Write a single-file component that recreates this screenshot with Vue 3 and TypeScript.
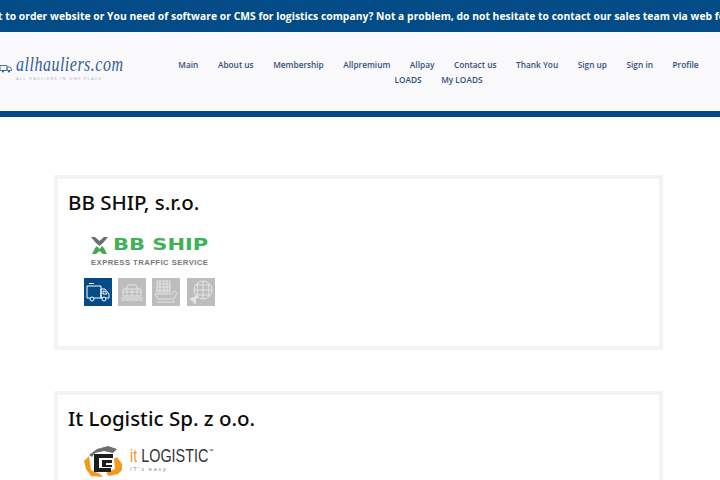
<script setup lang="ts">
const row1: string[] = ['Main', 'About us', 'Membership', 'Allpremium', 'Allpay', 'Contact us', 'Thank You', 'Sign up', 'Sign in', 'Profile']
const row2: string[] = ['LOADS', 'My LOADS']
</script>

<template>
  <div class="page">
    <div class="ticker">
      <span class="ticker-text">If you want to order website or You need of software or CMS for logistics company? Not a problem, do not hesitate to contact our sales team via web form</span>
    </div>
    <header class="header">
      <div class="brand">
        <svg class="truck" width="12" height="9" viewBox="0 0 12 9" fill="none" stroke="#4f79a6" stroke-width="1">
          <path d="M0 1.5h7v5H0zM7 3h3l1.500 2v1.500H7z" />
          <circle cx="3" cy="7.500" r="1" fill="#24527f" stroke="none" />
          <circle cx="9" cy="7.500" r="1" fill="#24527f" stroke="none" />
        </svg>
        <div class="brand-text">
          <div class="brand-name">allhauliers.com</div>
          <div class="brand-sub">ALL HAULIERS IN ONE PLACE</div>
        </div>
      </div>
      <nav class="nav">
        <div class="nav-row">
          <a v-for="item in row1" :key="item" class="nav-link">{{ item }}</a>
        </div>
        <div class="nav-row">
          <a v-for="item in row2" :key="item" class="nav-link">{{ item }}</a>
        </div>
      </nav>
    </header>

    <main class="list">
      <section class="card card-first">
        <h2 class="title">BB SHIP, s.r.o.</h2>
        <div class="bb-logo">
          <div class="bb-top">
            <svg width="17" height="17" viewBox="0 0 17 17">
              <path d="M0 0h4l4.500 4L13 0h4l-5 6-3.500 3L5 6z" fill="#6d6d6d" />
              <path d="M1 17l3-6 2-2 2.500 3L11 9l2 2 3 6h-4l-3.500-3L5 17z" fill="#43a94f" />
            </svg>
            <span class="bb-name">BB SHIP</span>
          </div>
          <div class="bb-sub">EXPRESS TRAFFIC SERVICE</div>
        </div>
        <div class="services">
          <div class="service active">
            <svg width="28" height="28" viewBox="0 0 28 28" fill="none" stroke="#fff" stroke-width="1">
              <path d="M3 8h14v12H3zM17 11h4l4 5v4h-8zM5 5.500h5" />
              <path d="M19 13h2l2 3h-4z" />
              <circle cx="8" cy="21" r="2" fill="#024b86" />
              <circle cx="20" cy="21" r="2" fill="#024b86" />
            </svg>
          </div>
          <div class="service">
            <svg width="28" height="28" viewBox="0 0 28 28" fill="none" stroke="#e4e4e4" stroke-width="1">
              <path d="M8 11l2-4h8l2 4M5 11h18v7H5zM5 14h18M9 11v7M14 11v7M19 11v7M3 20h22M3 22h22" />
            </svg>
          </div>
          <div class="service">
            <svg width="28" height="28" viewBox="0 0 28 28" fill="none" stroke="#e4e4e4" stroke-width="1">
              <path d="M5 3h13v11H5zM5 6h13M5 9h13M5 12h13M8 3v11M12 3v11M15 3v11" />
              <path d="M3 16h17l2-3 3 2-3 6H6zM5 24h18" />
            </svg>
          </div>
          <div class="service">
            <svg width="28" height="28" viewBox="0 0 28 28" fill="none" stroke="#e4e4e4" stroke-width="1">
              <circle cx="16" cy="12" r="9" />
              <path d="M7 12h18M16 3v18M11 5q-2 7 0 14M21 5q2 7 0 14M9 7h14M9 17h14" />
              <path d="M3 21l7-3 1 1-3 3 1 3-1 1-2-3z" fill="#e4e4e4" />
            </svg>
          </div>
        </div>
      </section>

      <section class="card card-second">
        <h2 class="title">It Logistic Sp. z o.o.</h2>
        <div class="it-logo">
          <svg width="38" height="31" viewBox="0 0 38 31">
            <path d="M5 9l8-6 11-3 9 3-4 4-9-2-9 2-3 4z" fill="#6e6e6e" />
            <path d="M0 15l5-5 2 14 9 4 3 3-12-1-5-7z" fill="#f39a1e" />
            <path d="M38 18l-5-7-3 2 1 10-9 4 3 3 9-2 5-5z" fill="#f39a1e" />
            <path d="M10 8h19v4H15v10h12v4H10z" fill="#1d1d1d" />
            <path d="M18 14h10v3h-6v2h6v2H18z" fill="#1d1d1d" />
          </svg>
          <div class="it-text">
            <div class="it-name"><span class="it-orange">it</span> LOGISTIC<sup class="tm">™</sup></div>
            <div class="it-sub">IT´s easy</div>
          </div>
        </div>
      </section>
    </main>
  </div>
</template>

<style>
html, body { margin: 0; padding: 0; background: #fff; }
</style>

<style scoped>
.page {
  width: 720px;
  height: 480px;
  overflow: hidden;
  font-family: "Open Sans", "Noto Sans", sans-serif;
  background: #fff;
}
.ticker {
  height: 32px;
  background: #024b86;
  overflow: hidden;
  display: flex;
  align-items: center;
}
.ticker-text {
  flex: none;
  margin-left: -56px;
  white-space: nowrap;
  color: #fff;
  font-size: 10.3px;
  font-weight: 700;
  letter-spacing: 0.04px;
}
.header {
  height: 79px;
  background: #f9f8fa;
  border-bottom: 6px solid #024b86;
  display: flex;
  align-items: flex-start;
}
.brand {
  width: 166px;
  flex: none;
  display: flex;
  align-items: flex-start;
  padding-top: 20px;
  box-sizing: border-box;
}
.truck { margin-top: 12px; flex: none; }
.brand-text { margin-left: 4px; }
.brand-name {
  font-family: "Liberation Serif", serif;
  font-style: italic;
  font-size: 16px;
  line-height: 24px;
  letter-spacing: 0.5px;
  color: #2f5f97;
  transform: scaleY(1.3);
  transform-origin: left center;
}
.brand-sub {
  font-size: 4px;
  line-height: 6px;
  letter-spacing: 1.3px;
  color: #9fb0c5;
}
.nav {
  flex: 1;
  padding-top: 25px;
  padding-right: 9px;
}
.nav-row {
  display: flex;
  justify-content: center;
  gap: 19.5px;
  height: 15px;
}
.nav-link {
  font-size: 8.3px;
  line-height: 15px;
  font-weight: 600;
  color: #33507b;
  white-space: nowrap;
}
.list {
  padding: 58px 57px 0 54px;
  display: flex;
  flex-direction: column;
  gap: 41px;
}
.card {
  border: 4px solid #f3f3f3;
  padding: 8px 10px 0;
  background: #fff;
  box-sizing: border-box;
}
.card-first { height: 175px; flex: none; }
.card-second { height: 180px; flex: none; }
.title {
  margin: 0;
  font-family: "Noto Sans", "Open Sans", sans-serif;
  font-size: 20.5px;
  line-height: 30px;
  font-weight: 500;
  color: #0c0c0c;
}
.bb-logo { margin: 20px 0 0 23px; width: 118px; }
.bb-top { display: flex; align-items: center; gap: 5px; height: 17px; }
.bb-name {
  font-family: "DejaVu Sans", sans-serif;
  font-weight: 700;
  font-size: 15px;
  line-height: 17px;
  color: #3fb257;
  transform: scaleX(1.4);
  transform-origin: left center;
}
.bb-sub {
  margin-top: 4px;
  font-family: "Liberation Sans", sans-serif;
  font-size: 7.7px;
  line-height: 9px;
  font-weight: 700;
  letter-spacing: 0.45px;
  white-space: nowrap;
  color: #777;
}
.services { display: flex; gap: 6.2px; margin: 11px 0 0 16px; }
.service {
  width: 28px;
  height: 28px;
  background: #bdbdbd;
  display: flex;
}
.service.active { background: #024b86; }
.it-logo { display: flex; align-items: flex-start; margin: 13px 0 0 16px; gap: 8px; }
.it-text { padding-top: 1px; }
.it-name {
  font-family: "Liberation Sans", sans-serif;
  font-size: 18px;
  line-height: 18px;
  color: #333;
  white-space: nowrap;
  transform: scaleX(0.8);
  transform-origin: left center;
}
.it-orange { color: #f39a1e; }
.tm { font-size: 6px; vertical-align: top; line-height: 8px; }
.it-sub {
  font-size: 6px;
  line-height: 8px;
  letter-spacing: 1.5px;
  color: #888;
}
</style>
